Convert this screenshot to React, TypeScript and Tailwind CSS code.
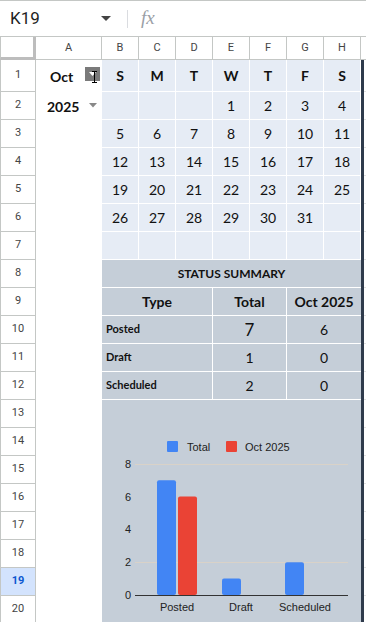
const rowHeights = [32, 28, 28, 28, 28, 28, 28, 28, 28, 28, 28, 28, 28, 28, 28, 28, 28, 28, 28, 28];
const cols = ['B', 'C', 'D', 'E', 'F', 'G', 'H'];
const days = ['S', 'M', 'T', 'W', 'T', 'F', 'S'];
const weeks: (number | null)[][] = [
  [null, null, null, 1, 2, 3, 4],
  [5, 6, 7, 8, 9, 10, 11],
  [12, 13, 14, 15, 16, 17, 18],
  [19, 20, 21, 22, 23, 24, 25],
  [26, 27, 28, 29, 30, 31, null],
  [null, null, null, null, null, null, null],
];

const summary = [
  { type: 'Posted', total: 7, month: 6 },
  { type: 'Draft', total: 1, month: 0 },
  { type: 'Scheduled', total: 2, month: 0 },
];

function Chart() {
  const y0 = 195;
  const unit = 16.4;
  const bars = [
    { x: 55, v: 7, c: '#4285f4' },
    { x: 76, v: 6, c: '#ea4335' },
    { x: 120, v: 1, c: '#4285f4' },
    { x: 183, v: 2, c: '#4285f4' },
  ];
  return (
    <svg width="259" height="222" className="block" style={{ fontFamily: '"Liberation Sans", Arial, sans-serif' }}>
      <rect x="65" y="41" width="11" height="11" rx="1" fill="#4285f4" />
      <text x="85" y="51" fontSize="11" fill="#222">Total</text>
      <rect x="124" y="41" width="11" height="11" rx="1" fill="#ea4335" />
      <text x="143" y="51" fontSize="11" fill="#222">Oct 2025</text>
      {[8, 6, 4, 2, 0].map((n) => (
        <text key={n} x="26" y={y0 - n * unit + 4} fontSize="11" fill="#222" textAnchor="middle">
          {n}
        </text>
      ))}
      <line x1="33" x2="246" y1="64.5" y2="64.5" stroke="#d9d2c8" />
      <line x1="33" x2="246" y1="162.5" y2="162.5" stroke="#d9d2c8" />
      {bars.map((b, i) => (
        <rect key={i} x={b.x} y={y0 - b.v * unit} width="19" height={b.v * unit} rx="2" fill={b.c} />
      ))}
      <line x1="33" x2="246" y1={y0 + 0.5} y2={y0 + 0.5} stroke="#333" />
      <text x="75" y="211" fontSize="11" fill="#222" textAnchor="middle">Posted</text>
      <text x="139" y="211" fontSize="11" fill="#222" textAnchor="middle">Draft</text>
      <text x="203" y="211" fontSize="11" fill="#222" textAnchor="middle">Scheduled</text>
    </svg>
  );
}

export default function App() {
  return (
    <div className="w-[366px] h-[622px] overflow-hidden bg-white font-['Lato',sans-serif] text-[#111]">
      {/* formula bar */}
      <div className="h-[37px] flex items-center border-t border-b border-[#c4c7c5] font-['Roboto',sans-serif]">
        <span className="ml-[10px] w-[84px] text-[17px] text-[#1f1f1f]">K19</span>
        <svg width="10" height="6" viewBox="0 0 10 6" className="ml-[7px]">
          <path d="M0 0 L10 0 L5 5 Z" fill="#444" />
        </svg>
        <div className="ml-[16px] w-px h-[18px] bg-[#dadce0]" />
        <span className="ml-[13px] text-[19px] italic text-[#9aa0a6] font-['Liberation_Serif',serif]">fx</span>
      </div>

      {/* column headers */}
      <div className="h-[23px] flex text-[11px] text-[#444] font-['Roboto',sans-serif] border-b border-[#c4c7c5]">
        <div className="w-[36px] border-l border-[#c4c7c5] border-r-[3px] border-r-[#bdbdbd] border-b-[3px] border-b-[#bdbdbd] h-[23px]" />
        <div className="w-[66px] flex items-center justify-center border-r border-[#c4c7c5]">A</div>
        {cols.map((c) => (
          <div key={c} className="w-[37px] flex items-center justify-center border-r border-[#c4c7c5]">
            {c}
          </div>
        ))}
        <div className="flex-1" />
      </div>

      {/* sheet body */}
      <div className="flex">
        {/* row numbers */}
        <div className="w-[36px] flex flex-col border-l border-r border-[#c4c7c5] text-[11px] text-[#444] font-['Roboto',sans-serif]">
          {rowHeights.map((h, i) => (
            <div
              key={i}
              style={{ height: h }}
              className={`flex items-center justify-center border-b border-[#c4c7c5] ${
                i === 18 ? 'bg-[#d3e3fd] text-[#0b57d0] font-bold' : ''
              }`}
            >
              {i + 1}
            </div>
          ))}
        </div>

        {/* column A */}
        <div className="w-[66px] flex flex-col">
          <div className="h-[32px] flex items-center relative">
            <span className="ml-[14px] text-[14px] font-bold">Oct</span>
            <div className="absolute left-[49px] top-[7px] w-[15px] h-[14px] bg-[#7a7a7a] flex items-center justify-center">
              <svg width="7" height="4" viewBox="0 0 7 4">
                <path d="M0 0 L7 0 L3.5 4 Z" fill="#fff" />
              </svg>
            </div>
            <svg width="7" height="12" viewBox="0 0 7 12" className="absolute left-[55px] top-[11px]">
              <path d="M3.5 1 V11 M1 0.5 H6 M1 11.5 H6" stroke="#000" strokeWidth="1" fill="none" />
            </svg>
          </div>
          <div className="h-[28px] flex items-center relative">
            <span className="ml-[11px] text-[14px] font-bold">2025</span>
            <svg width="8" height="5" viewBox="0 0 8 5" className="absolute left-[53px] top-[11px]">
              <path d="M0 0 L8 0 L4 4.5 Z" fill="#888" />
            </svg>
          </div>
        </div>

        {/* B-H block */}
        <div className="w-[259px] flex flex-col">
          <div className="grid grid-cols-7 bg-[#e6ecf5]">
            {days.map((d, i) => (
              <div key={i} className="h-[32px] flex items-center justify-center text-[14px] font-bold border-r border-b border-white">
                {d}
              </div>
            ))}
            {weeks.flat().map((n, i) => (
              <div key={i} className="h-[28px] flex items-center justify-center text-[14px] border-r border-b border-white">
                {n ?? ''}
              </div>
            ))}
          </div>

          <div className="bg-[#c5ced8]">
            <div className="h-[28px] flex items-center justify-center text-[12px] font-bold border-b border-white">
              STATUS SUMMARY
            </div>
            <div className="grid grid-cols-[111px_74px_74px]">
              <div className="h-[28px] flex items-center justify-center text-[14px] font-bold border-r border-b border-white">Type</div>
              <div className="h-[28px] flex items-center justify-center text-[14px] font-bold border-r border-b border-white">Total</div>
              <div className="h-[28px] flex items-center justify-center text-[14px] font-bold border-b border-white">Oct 2025</div>
              {summary.map((r) => (
                <div key={r.type} className="contents">
                  <div className="h-[28px] flex items-center pl-[4px] text-[11px] font-bold border-r border-b border-white">{r.type}</div>
                  <div className={`h-[28px] flex items-center justify-center border-r border-b border-white ${r.total === 7 ? 'text-[17px]' : 'text-[14px]'}`}>
                    {r.total}
                  </div>
                  <div className="h-[28px] flex items-center justify-center text-[14px] border-b border-white">{r.month}</div>
                </div>
              ))}
            </div>
            <Chart />
          </div>
        </div>

        {/* frozen edge */}
        <div className="w-[3px] bg-[#2f3b4c] h-[562px]" />

        {/* column I */}
        <div className="flex-1 flex flex-col">
          {rowHeights.map((h, i) => (
            <div key={i} style={{ height: h }} className="border-b border-[#e1e1e1]" />
          ))}
        </div>
      </div>
    </div>
  );
}
